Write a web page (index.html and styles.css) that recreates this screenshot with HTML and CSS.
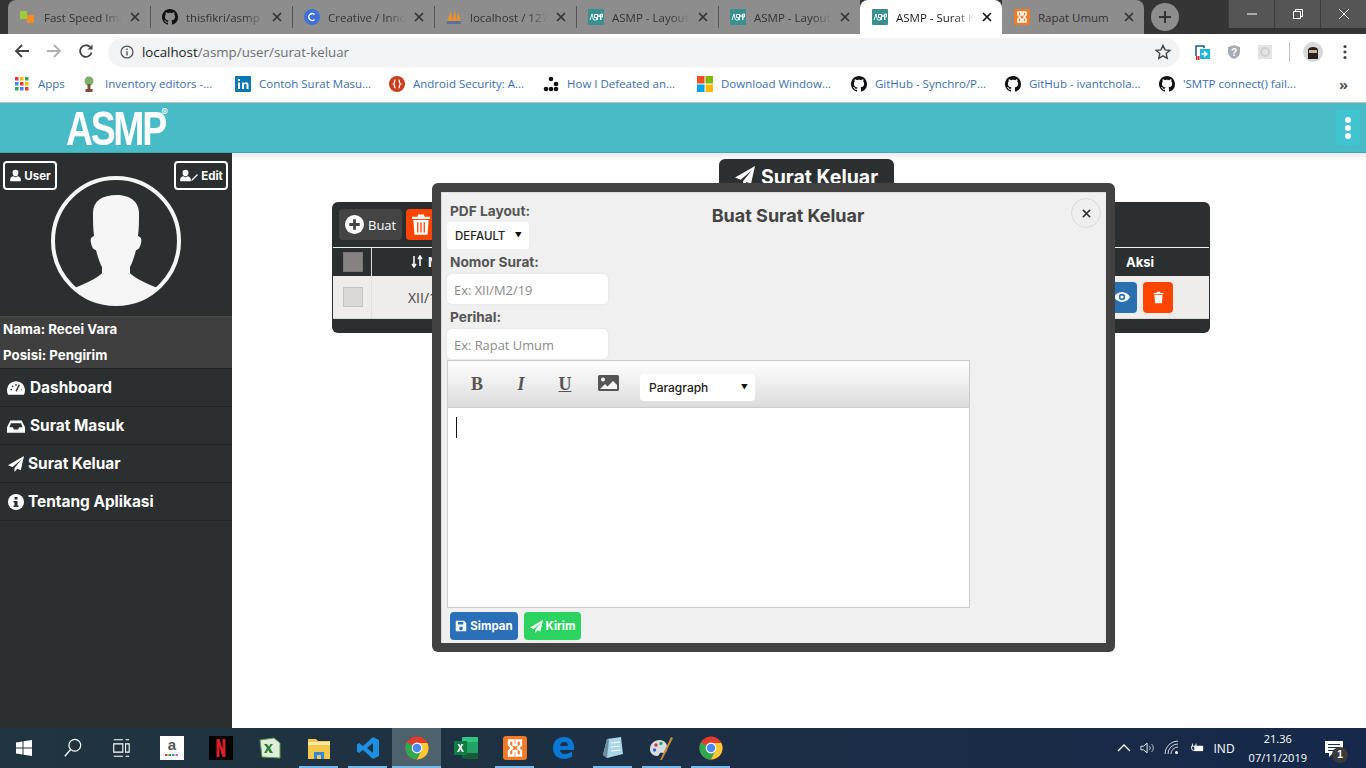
FILE: index.html
```html
<!DOCTYPE html>
<html lang="id">
<head>
<meta charset="utf-8">
<title>ASMP - Surat Keluar</title>
<link rel="stylesheet" href="styles.css">
</head>
<body>
<svg class="defs" aria-hidden="true">
  <defs>
    <symbol id="gh" viewBox="0 0 16 16"><path d="M8 0C3.58 0 0 3.58 0 8c0 3.54 2.29 6.53 5.47 7.59.4.07.55-.17.55-.38 0-.19-.01-.82-.01-1.49-2.01.37-2.53-.49-2.69-.94-.09-.23-.48-.94-.82-1.13-.28-.15-.68-.52-.01-.53.63-.01 1.08.58 1.23.82.72 1.21 1.87.87 2.33.66.07-.52.28-.87.51-1.07-1.78-.2-3.64-.89-3.64-3.95 0-.87.31-1.59.82-2.15-.08-.2-.36-1.02.08-2.12 0 0 .67-.21 2.2.82.64-.18 1.32-.27 2-.27.68 0 1.36.09 2 .27 1.53-1.04 2.2-.82 2.2-.82.44 1.1.16 1.92.08 2.12.51.56.82 1.27.82 2.15 0 3.07-1.87 3.75-3.65 3.95.29.25.54.73.54 1.48 0 1.07-.01 1.93-.01 2.2 0 .21.15.46.55.38A8.013 8.013 0 0016 8c0-4.42-3.58-8-8-8z"/></symbol>
    <symbol id="x" viewBox="0 0 10 10"><path d="M1 1l8 8M9 1l-8 8" fill="none" stroke="currentColor" stroke-width="1.7"/></symbol>
    <symbol id="asmpfav" viewBox="0 0 16 16"><rect width="16" height="16" rx="1" fill="#3a8f8f"/><path d="M2 11l2-6 1.5 6M6 11h2.5V8.5H6.5V5.5H9M9.5 11V5l1.5 3 1.5-3v6M13 11V5h1.5v3H13" fill="none" stroke="#fff" stroke-width=".9"/></symbol>
    <symbol id="xampp" viewBox="0 0 16 16"><rect width="16" height="16" rx="2" fill="#f07a26"/><path d="M4 3h3v3h2V3h3v3l-2 2 2 2v3H9v-3H7v3H4v-3l2-2-2-2z" fill="none" stroke="#fff" stroke-width="1.6"/></symbol>
    <symbol id="plane" viewBox="0 0 16 16"><path d="M16 0L0 9.200l4.500 1.800L13.500 3.400 6.500 12v4l2.700-3.300 3.600 1.500z"/></symbol>
    <symbol id="user" viewBox="0 0 16 16"><path d="M8 1a3.600 3.600 0 0 1 3.600 3.800C11.600 7 10 9 8 9S4.400 7 4.400 4.800A3.600 3.600 0 0 1 8 1zM1.500 15v-2.400C1.500 10.500 3.500 9.300 5.300 8.900 6 9.700 7 10.100 8 10.100s2-.4 2.700-1.200c1.800.4 3.800 1.600 3.800 3.700V15z"/></symbol>
    <symbol id="trash" viewBox="0 0 16 16"><path d="M6 1h4l.6 1.400H14v1.600H2V2.400h3.400zM3 5h10l-.8 10H3.800z"/></symbol>
    <symbol id="chrome" viewBox="0 0 24 24"><circle cx="12" cy="12" r="11.500" fill="#e33b2e"/><path d="M12 12L2 6.200A11.500 11.500 0 0 0 12 23.500L17.800 13z" fill="#2fa84f"/><path d="M12 7h10.400A11.500 11.500 0 0 1 12 23.500L17 13z" fill="#fcc934"/><circle cx="12" cy="12" r="5.400" fill="#fff"/><circle cx="12" cy="12" r="4.200" fill="#4a89f3"/></symbol>
  </defs>
</svg>

<div class="tabstrip">
  <div class="tab">
    <svg class="fav" viewBox="0 0 16 16"><rect x="1" y="2" width="7" height="8" fill="#9ccc3c"/><rect x="8" y="6" width="7" height="8" fill="#f58a1f"/></svg>
    <span class="tab-title">Fast Speed Ima</span><svg class="tab-x"><use href="#x"/></svg>
  </div>
  <div class="tab">
    <svg class="fav"><use href="#gh"/></svg>
    <span class="tab-title">thisfikri/asmp</span><svg class="tab-x"><use href="#x"/></svg>
  </div>
  <div class="tab">
    <svg class="fav" viewBox="0 0 16 16"><circle cx="8" cy="8" r="8" fill="#3f6fd8"/><path d="M10.500 5.500a3.400 3.400 0 1 0 0 5" fill="none" stroke="#fff" stroke-width="1.400"/></svg>
    <span class="tab-title">Creative / Inno</span><svg class="tab-x"><use href="#x"/></svg>
  </div>
  <div class="tab">
    <svg class="fav" viewBox="0 0 16 16"><path d="M1 12L5 2l1.500 10zM6 12L9 1l1.500 11zM10.500 12L12 3l3 9z" fill="#e8902a"/><rect x="1" y="12" width="14" height="3" fill="#5a6fa8"/></svg>
    <span class="tab-title">localhost / 127</span><svg class="tab-x"><use href="#x"/></svg>
  </div>
  <div class="tab">
    <svg class="fav"><use href="#asmpfav"/></svg>
    <span class="tab-title">ASMP - Layout</span><svg class="tab-x"><use href="#x"/></svg>
  </div>
  <div class="tab">
    <svg class="fav"><use href="#asmpfav"/></svg>
    <span class="tab-title">ASMP - Layout</span><svg class="tab-x"><use href="#x"/></svg>
  </div>
  <div class="tab tab-active">
    <svg class="fav"><use href="#asmpfav"/></svg>
    <span class="tab-title">ASMP - Surat K</span><svg class="tab-x"><use href="#x"/></svg>
  </div>
  <div class="tab tab-last">
    <svg class="fav"><use href="#xampp"/></svg>
    <span class="tab-title">Rapat Umum</span><svg class="tab-x"><use href="#x"/></svg>
  </div>
  <div class="newtab"><svg viewBox="0 0 14 14"><path d="M7 1v12M1 7h12" fill="none" stroke="#333" stroke-width="2"/></svg></div>
  <div class="winctrls">
    <div class="winbtn"><svg viewBox="0 0 12 12"><path d="M1 6h10" stroke="#fff" stroke-width="1" fill="none"/></svg></div>
    <div class="winbtn"><svg viewBox="0 0 12 12"><path d="M1.500 3.500h7v7h-7zM3.500 3.500v-2h7v7h-2" stroke="#fff" stroke-width="1" fill="none"/></svg></div>
    <div class="winbtn"><svg viewBox="0 0 12 12"><path d="M1 1l10 10M11 1L1 11" stroke="#fff" stroke-width="1" fill="none"/></svg></div>
  </div>
</div>

<div class="toolbar">
  <svg class="nav-ic" viewBox="0 0 16 16"><path d="M15 8H2M8 2L2 8l6 6" fill="none" stroke="#444" stroke-width="1.800"/></svg>
  <svg class="nav-ic" viewBox="0 0 16 16"><path d="M1 8h13M8 2l6 6-6 6" fill="none" stroke="#b0b0b0" stroke-width="1.800"/></svg>
  <svg class="nav-ic" viewBox="0 0 16 16"><path d="M13.500 9.500A5.800 5.800 0 1 1 12 4" fill="none" stroke="#444" stroke-width="1.800"/><path d="M14.500 1.500v5h-5z" fill="#444"/></svg>
  <div class="omnibox">
    <svg class="omni-info" viewBox="0 0 16 16"><circle cx="8" cy="8" r="6.800" fill="none" stroke="#555" stroke-width="1.500"/><path d="M8 7v5M8 4v1.600" stroke="#555" stroke-width="1.600"/></svg>
    <span class="url"><span class="url-host">localhost</span>/asmp/user/surat-keluar</span>
    <svg class="omni-star" viewBox="0 0 16 16"><path d="M8 1.500l2 4.400 4.700.5-3.500 3.200 1 4.700L8 11.900l-4.200 2.400 1-4.700L1.300 6.400 6 5.900z" fill="none" stroke="#444" stroke-width="1.400"/></svg>
  </div>
  <div class="ext-row">
    <svg class="ext" viewBox="0 0 16 16"><path d="M1 12V2h8v2" fill="none" stroke="#1d5a8a" stroke-width="1.500"/><rect x="5" y="5" width="10" height="10" fill="#1fb7dc"/><path d="M6.500 10h5M9 7.500l3 2.500-3 2.500" fill="none" stroke="#fff" stroke-width="1.500"/><rect x="1" y="12" width="1.500" height="4" fill="#e02020"/><rect x="3" y="12" width="1.500" height="4" fill="#e02020"/></svg>
    <svg class="ext" viewBox="0 0 16 16"><path d="M8 1l6 2v5c0 3.500-3 6-6 7-3-1-6-3.500-6-7V3z" fill="#a8adb5"/><text x="8" y="11.500" class="ext-q">?</text></svg>
    <svg class="ext" viewBox="0 0 16 16"><rect x="1" y="1" width="14" height="14" fill="#e4e4e4"/><circle cx="8" cy="8" r="4" fill="none" stroke="#cfcfcf" stroke-width="2"/></svg>
    <span class="ext-sep"></span>
    <svg class="ext-avatar" viewBox="0 0 20 20"><circle cx="10" cy="10" r="10" fill="#d8d8d8"/><path d="M5 8c0-4 10-4 10 0v9H5z" fill="#222"/><rect x="6" y="8" width="8" height="3" fill="#d9b08c"/></svg>
    <svg class="ext-dots" viewBox="0 0 4 16"><circle cx="2" cy="2.500" r="1.600" fill="#444"/><circle cx="2" cy="8" r="1.600" fill="#444"/><circle cx="2" cy="13.500" r="1.600" fill="#444"/></svg>
  </div>
</div>

<div class="bookmarks">
  <div class="bm bm-apps">
    <svg class="bm-ic" viewBox="0 0 14 14"><g><rect width="3.500" height="3.500" fill="#e53935"/><rect x="5" width="3.500" height="3.500" fill="#fbbc05"/><rect x="10" width="3.500" height="3.500" fill="#34a853"/><rect y="5" width="3.500" height="3.500" fill="#4285f4"/><rect x="5" y="5" width="3.500" height="3.500" fill="#e53935"/><rect x="10" y="5" width="3.500" height="3.500" fill="#fbbc05"/><rect y="10" width="3.500" height="3.500" fill="#34a853"/><rect x="5" y="10" width="3.500" height="3.500" fill="#4285f4"/><rect x="10" y="10" width="3.500" height="3.500" fill="#e53935"/></g></svg>
    <span>Apps</span>
  </div>
  <div class="bm"><svg class="bm-ic" viewBox="0 0 16 16"><circle cx="8" cy="5" r="4.500" fill="#7fae6a"/><rect x="6.500" y="8" width="3" height="5" fill="#6b5a3a"/><rect x="4.500" y="13" width="7" height="3" fill="#8a4b3a"/></svg><span>Inventory editors -...</span></div>
  <div class="bm"><svg class="bm-ic" viewBox="0 0 16 16"><rect width="16" height="16" rx="1" fill="#0a78b5"/><path d="M3 6.500h2V13H3zM3 3h2v2H3zM7 6.500h2v1c.5-.8 1.300-1.200 2.200-1.200 1.500 0 2.300 1 2.300 2.800V13h-2V9.500c0-.9-.4-1.400-1.100-1.400S9 8.600 9 9.500V13H7z" fill="#fff"/></svg><span>Contoh Surat Masu...</span></div>
  <div class="bm"><svg class="bm-ic" viewBox="0 0 16 16"><circle cx="8" cy="8" r="8" fill="#c8401e"/><path d="M6.500 4C5 4 6 7.500 4.500 8 6 8.500 5 12 6.500 12M9.500 4C11 4 10 7.500 11.500 8 10 8.500 11 12 9.500 12" fill="none" stroke="#fff" stroke-width="1.300"/></svg><span>Android Security: A...</span></div>
  <div class="bm"><svg class="bm-ic" viewBox="0 0 16 16"><rect width="16" height="16" fill="#fff"/><circle cx="8" cy="3" r="2.300"/><circle cx="13" cy="8" r="2.300"/><circle cx="3" cy="13" r="2.300"/><circle cx="8" cy="13" r="2.300"/><circle cx="13" cy="13" r="2.300"/></svg><span>How I Defeated an...</span></div>
  <div class="bm"><svg class="bm-ic" viewBox="0 0 16 16"><rect width="7.500" height="7.500" fill="#f25022"/><rect x="8.500" width="7.500" height="7.500" fill="#7fba00"/><rect y="8.500" width="7.500" height="7.500" fill="#00a4ef"/><rect x="8.500" y="8.500" width="7.500" height="7.500" fill="#ffb900"/></svg><span>Download Window...</span></div>
  <div class="bm"><svg class="bm-ic"><use href="#gh"/></svg><span>GitHub - Synchro/P...</span></div>
  <div class="bm"><svg class="bm-ic"><use href="#gh"/></svg><span>GitHub - ivantchola...</span></div>
  <div class="bm"><svg class="bm-ic"><use href="#gh"/></svg><span>'SMTP connect() fail...</span></div>
  <span class="bm-more">»</span>
</div>

<header class="topbar">
  <div class="logo"><span class="logo-text">ASMP</span><span class="logo-reg">®</span></div>
  <div class="topbar-menu"><span></span><span></span><span></span></div>
</header>

<div class="app">
  <aside class="sidebar">
    <div class="side-btns">
      <div class="side-btn"><svg class="ic-13"><use href="#user"/></svg>User</div>
      <div class="side-btn"><svg class="ic-13"><use href="#user"/></svg><svg class="ic-pen" viewBox="0 0 8 8"><path d="M0 8l2-1 6-6-1-1-6 6z"/></svg>Edit</div>
    </div>
    <div class="avatar-wrap">
      <svg class="avatar" viewBox="0 0 130 130">
        <defs><clipPath id="avclip"><circle cx="65" cy="65" r="63"/></clipPath></defs>
        <circle cx="65" cy="65" r="63" fill="none" stroke="#f5f5f5" stroke-width="4"/>
        <path clip-path="url(#avclip)" d="M66 19c-15 0-24 6-24 18 0 8 0 15 1 23-3 1-4 3-3 7 1 5 3 7 5 7 2 8 4 13 6 17v6c-4 5-14 9-25 14l-6 3v26h90v-26l-6-3c-11-5-21-9-25-14v-6c2-4 4-9 6-17 2 0 4-2 5-7 1-4 0-6-3-7 1-8 1-15 1-23 0-12-10-18-22-18z" fill="#f5f5f5"/>
      </svg>
    </div>
    <div class="side-info">
      <div>Nama: Recei Vara</div>
      <div>Posisi: Pengirim</div>
    </div>
    <nav class="side-menu">
      <div class="side-item"><svg class="ic-18" viewBox="0 0 16 16"><path d="M8 2a7.800 7.800 0 0 0-8 8c0 1.500.4 2.800 1 4h14c.6-1.200 1-2.500 1-4a7.800 7.800 0 0 0-8-8z"/><path d="M8 11L11 5M3 9.500h1.500M4.500 6l1 1M8 4.500V6M12.500 9.500H13" stroke="#2c2f30" stroke-width="1.200" fill="none"/></svg>Dashboard</div>
      <div class="side-item"><svg class="ic-18" viewBox="0 0 16 16"><path d="M3 3h10l3 6v5H0V9z"/><path d="M3.500 5.500h9l1.300 3.500h-3l-1 2H6.200l-1-2h-3z" fill="#2c2f30"/></svg>Surat Masuk</div>
      <div class="side-item side-item-tight"><svg class="ic-16"><use href="#plane"/></svg>Surat Keluar</div>
      <div class="side-item side-item-tight"><svg class="ic-16" viewBox="0 0 16 16"><circle cx="8" cy="8" r="8"/><path d="M6.500 3h3v2.500h-3zM5.500 7h4v4.500h1V13h-5v-1.500h1V8.500h-1z" fill="#2c2f30"/></svg>Tentang Aplikasi</div>
    </nav>
  </aside>

  <main class="content">
    <div class="page-title"><svg class="ic-title"><use href="#plane"/></svg>Surat Keluar</div>
    <section class="panel">
      <div class="panel-head">
        <div class="btn-buat"><svg class="ic-plus" viewBox="0 0 20 20"><circle cx="10" cy="10" r="10" fill="#fff"/><path d="M10 4.500v11M4.500 10h11" stroke="#444" stroke-width="3"/></svg>Buat</div>
        <div class="btn-del"><svg class="ic-del" viewBox="0 0 16 18"><path d="M5.500 0h5l.7 2H16v2H0V2h4.800zM1.200 5h13.600l-1 13H2.200zM4.500 7v9h1.200V7zM7.400 7v9h1.200V7zM10.300 7v9h1.200V7z" fill-rule="evenodd"/></svg></div>
      </div>
      <div class="row row-head">
        <div class="cell-check"><span class="check check-dark"></span></div>
        <div class="cell-main cell-sort"><svg class="ic-sort" viewBox="0 0 14 14"><path d="M3 1v10M1 9l2 3 2-3M9 1v10M7 4l2-3 2 3" fill="none" stroke="#fff" stroke-width="1.500"/></svg>N</div>
        <div class="cell-act cell-act-head">Aksi</div>
      </div>
      <div class="row row-body">
        <div class="cell-check"><span class="check"></span></div>
        <div class="cell-main">XII/1</div>
        <div class="cell-act">
          <span class="act act-view"><svg class="ic-eye" viewBox="0 0 16 10"><path d="M8 0c3.500 0 6.500 2.200 8 5-1.500 2.800-4.500 5-8 5S1.500 7.800 0 5c1.500-2.800 4.500-5 8-5z" fill="#fff"/><circle cx="8" cy="5" r="3.200" fill="#2a6fb0"/><circle cx="8" cy="5" r="1.600" fill="#fff"/></svg></span>
          <span class="act act-del"><svg class="ic-13"><use href="#trash"/></svg></span>
        </div>
      </div>
      <div class="panel-foot"></div>
    </section>
  </main>

  <div class="modal">
    <div class="modal-inner">
      <button class="modal-close" type="button"><svg class="ic-10"><use href="#x"/></svg></button>
      <h2 class="modal-title">Buat Surat Keluar</h2>
      <label class="f-label">PDF Layout:</label>
      <div class="select select-pdf"><span>DEFAULT</span><span class="caret">▼</span></div>
      <label class="f-label f-gap">Nomor Surat:</label>
      <div class="input">Ex: XII/M2/19</div>
      <label class="f-label f-gap">Perihal:</label>
      <div class="input">Ex: Rapat Umum</div>
      <div class="editor">
        <div class="editor-bar">
          <span class="ed-btn ed-b">B</span>
          <span class="ed-btn ed-i">I</span>
          <span class="ed-btn ed-u">U</span>
          <svg class="ed-img" viewBox="0 0 21 16"><path d="M1.500 0h18A1.500 1.500 0 0 1 21 1.500v13a1.500 1.500 0 0 1-1.500 1.500h-18A1.500 1.500 0 0 1 0 14.500v-13A1.500 1.500 0 0 1 1.500 0z" fill="#555"/><circle cx="5" cy="4.500" r="2" fill="#f4f4f4"/><path d="M2 14l5-5 2.500 2.500L15 6l4 4v4z" fill="#f4f4f4"/></svg>
          <div class="select select-para"><span>Paragraph</span><span class="caret">▼</span></div>
        </div>
        <div class="editor-body"><span class="text-cursor"></span></div>
      </div>
      <div class="modal-actions">
        <span class="m-btn m-save"><svg class="ic-12" viewBox="0 0 16 16"><path d="M1.500 1H12l3 3v10.500a.5.500 0 0 1-.5.500h-13a.5.500 0 0 1-.5-.5v-13a.5.500 0 0 1 .5-.5zM4 2.500V6h7V2.500zM8 8.500a2.500 2.500 0 1 0 0 5 2.500 2.500 0 0 0 0-5z" fill-rule="evenodd"/></svg>Simpan</span>
        <span class="m-btn m-send"><svg class="ic-13"><use href="#plane"/></svg>Kirim</span>
      </div>
    </div>
  </div>
</div>

<footer class="taskbar">
  <div class="tb-cell tb-start"><svg class="tb-ic-start" viewBox="0 0 16 16"><path d="M0 2.500l6.500-1V7.500H0zM7.500 1.300L16 0v7.500H7.500zM0 8.500h6.500v6L0 13.500zM7.500 8.500H16V16l-8.500-1.300z" fill="#fff"/></svg></div>
  <div class="tb-cell tb-small"><svg class="tb-ic" viewBox="0 0 22 22"><circle cx="13" cy="8" r="6.500" fill="none" stroke="#fff" stroke-width="1.300"/><path d="M8.500 12.500L2 20" stroke="#fff" stroke-width="1.500"/></svg></div>
  <div class="tb-cell tb-small tb-small-last"><svg class="tb-ic" viewBox="0 0 22 22"><path d="M3 2h10M3 20h10M3 6.500h10v9H3zM16 2h4M16 20h4M16 6.500h4v9h-4z" fill="none" stroke="#fff" stroke-width="1.200"/></svg></div>
  <div class="tb-cell"><svg class="tb-ic-lg" viewBox="0 0 24 24"><rect width="24" height="24" fill="#fff"/><text x="12" y="14" class="tb-a">a</text><rect x="5" y="18" width="2.500" height="2" fill="#e33"/><rect x="8.500" y="18" width="2.500" height="2" fill="#3a3"/><rect x="12" y="18" width="2.500" height="2" fill="#39c"/><rect x="15.500" y="18" width="2.500" height="2" fill="#c6c"/></svg></div>
  <div class="tb-cell"><svg class="tb-ic-lg" viewBox="0 0 24 24"><rect width="24" height="24" fill="#000"/><path d="M7.500 3h3l3 10V3h3v18h-3l-3-10v10h-3z" fill="#d81f26"/></svg></div>
  <div class="tb-cell"><svg class="tb-ic-lg" viewBox="0 0 24 24"><path d="M2 4l14-2 6 5v15l-18-1z" fill="#dfeeda" stroke="#5f9a4b"/><path d="M6 8l3 4-3 5h2.500l1.700-3 1.700 3H15l-3-5 3-4h-2.500l-1.500 2.500L9 8z" fill="#2f7d32"/></svg></div>
  <div class="tb-cell tb-open"><svg class="tb-ic-lg" viewBox="0 0 24 24"><path d="M1 3h8l2 2h12v18H1z" fill="#f2c94c"/><rect x="1" y="6" width="22" height="3" fill="#fbe9a6"/><path d="M7 23v-7h10v7h-3v-4h-4v4z" fill="#2f87d8"/></svg></div>
  <div class="tb-cell tb-open"><svg class="tb-ic-lg" viewBox="0 0 24 24"><path d="M17 1l6 3v16l-6 3-10-9-4 3-2-1.500V8.500L3 7l4 3zM17 7l-6 5 6 5z" fill="#1e8fe0" fill-rule="evenodd"/></svg></div>
  <div class="tb-cell tb-active"><svg class="tb-ic-lg"><use href="#chrome"/></svg></div>
  <div class="tb-cell"><svg class="tb-ic-lg" viewBox="0 0 24 24"><rect x="8" y="1" width="16" height="22" fill="#21a366"/><path d="M8 1h16v5H8z" fill="#33c481"/><path d="M8 17h16v6H8z" fill="#185c37"/><rect y="5" width="13" height="14" fill="#107c41"/><path d="M3.500 8l2 3.500L3 16h2l1.500-2.800L8 16h2l-2.500-4.500 2-3.500h-2L6.500 10 5.300 8z" fill="#fff"/></svg></div>
  <div class="tb-cell tb-open"><svg class="tb-ic-lg"><use href="#xampp"/></svg></div>
  <div class="tb-cell"><svg class="tb-ic-lg" viewBox="0 0 24 24"><path d="M12 1C5 1 1 6 1 12c0 7 5 11 11 11 3.500 0 6-1 8-2.500v-5c-2 1.500-4.500 2.500-7 2.500-3 0-5-1.500-5-4h14V11C22 5 18 1 12 1zM8 10c.3-2.500 2-4 4.200-4s3.800 1.500 3.800 4z" fill="#0a78d7" fill-rule="evenodd"/></svg></div>
  <div class="tb-cell tb-open"><svg class="tb-ic-lg" viewBox="0 0 24 24"><path d="M6 3l14-2 2 17-16 4-4-3z" fill="#a9d6e8"/><path d="M6 3l-4 16 4 3 2-18z" fill="#6a8ea0"/><path d="M10 7l9-1M10 11l9-1M10 15l9-1" stroke="#fff"/></svg></div>
  <div class="tb-cell tb-open"><svg class="tb-ic-lg" viewBox="0 0 24 24"><path d="M10 4C4 4 0 8 0 13c0 4 3 7 7 7 2 0 2-2 3-3s4 1 6-1c3-3 1-12-6-12z" fill="#d8dde2"/><circle cx="6" cy="9" r="1.700" fill="#d33"/><circle cx="11" cy="7.500" r="1.700" fill="#2a7"/><circle cx="4.500" cy="14" r="1.700" fill="#36c"/><path d="M21 1l2 1-11 22h-2z" fill="#c98a3c"/></svg></div>
  <div class="tb-cell tb-open"><svg class="tb-ic-lg"><use href="#chrome"/></svg></div>
  <div class="tray">
    <svg class="tray-ic" viewBox="0 0 16 16"><path d="M2 11l6-6 6 6" fill="none" stroke="#fff" stroke-width="1.300"/></svg>
    <svg class="tray-ic" viewBox="0 0 18 16"><path d="M1 6h3l4-3.500v11L4 10H1z" fill="none" stroke="#fff"/><path d="M10.500 5.500a3.500 3.500 0 0 1 0 5M13 3.500a6 6 0 0 1 0 9" fill="none" stroke="#c8ced4"/></svg>
    <svg class="tray-ic" viewBox="0 0 16 16"><path d="M1 14A13 13 0 0 1 14 1M4 14A10 10 0 0 1 14 4M7 14a7 7 0 0 1 7-7" fill="none" stroke="#d0d5da"/><circle cx="12.500" cy="12.500" r="1.500" fill="#fff"/></svg>
    <svg class="tray-ic" viewBox="0 0 18 16"><path d="M5 3v3M9 3v3M4 6h6v2a3 3 0 0 1-6 0z" fill="none" stroke="#fff"/><rect x="7" y="5.500" width="10" height="6" fill="#fff"/></svg>
    <span class="tray-lang">IND</span>
    <div class="clock"><span>21.36</span><span>07/11/2019</span></div>
    <div class="notif">
      <svg class="notif-ic" viewBox="0 0 18 18"><path d="M0 1h18v12H8l-4 4v-4H0z" fill="#fff"/><path d="M3 4.500h12M3 7.500h12M3 10.500h8" stroke="#1c2d4a"/></svg>
      <span class="notif-badge">1</span>
    </div>
  </div>
</footer>
</body>
</html>
```

FILE: styles.css
```css
* { box-sizing: border-box; }
html, body { margin: 0; padding: 0; }
body {
  width: 1366px;
  height: 768px;
  overflow: hidden;
  display: flex;
  flex-direction: column;
  font-family: "Inter", "Liberation Sans", sans-serif;
  background: #fff;
  position: relative;
}
svg { display: block; flex: none; fill: currentColor; }
.defs { width: 0; height: 0; position: absolute; }

/* browser tab strip */
.tabstrip {
  height: 34px;
  flex: none;
  display: flex;
  background: #353535;
  padding-left: 8px;
  font-family: "Open Sans", "Liberation Sans", sans-serif;
  font-size: 11.500px;
  color: #333;
}
.tab {
  width: 142px;
  height: 34px;
  flex: none;
  display: flex;
  align-items: center;
  background: #8d8d8d;
  padding: 0 10px 0 11px;
  position: relative;
}
.tab:first-child { border-radius: 8px 0 0 0; }
.tab:first-child .tab-title { margin-left: 9px; }
.tab + .tab { padding-left: 12px; }
.tab + .tab::before {
  content: "";
  position: absolute;
  left: 0;
  top: 6px;
  height: 22px;
  border-left: 1px solid #555;
}
.tab-active { background: #fff; color: #222; border-radius: 8px 8px 0 0; }
.tab-active::before, .tab-last::before { display: none; }
.tab-last { border-radius: 0 8px 0 0; }
.fav { width: 16px; height: 16px; color: #111; }
.tab-title {
  margin-left: 8px;
  flex: 1;
  min-width: 0;
  white-space: nowrap;
  -webkit-mask-image: linear-gradient(to right, #000 75%, transparent 100%);
  mask-image: linear-gradient(to right, #000 75%, transparent 100%);
}
.tab-last .tab-title, .tab-last .tab-title { -webkit-mask-image: none; mask-image: none; }
.tab-x { width: 10px; height: 10px; margin-left: 8px; color: #333; }
.tab-active .tab-x { color: #111; }
.newtab {
  width: 28px;
  height: 28px;
  margin: 3px 0 0 7px;
  flex: none;
  border-radius: 50%;
  background: #8d8d8d;
  display: flex;
  align-items: center;
  justify-content: center;
}
.newtab svg { width: 14px; height: 14px; }
.winctrls { margin-left: auto; display: flex; height: 28px; }
.winbtn {
  width: 46px;
  background: #555;
  border-left: 1px solid #3d3d3d;
  display: flex;
  align-items: center;
  justify-content: center;
}
.winbtn svg { width: 12px; height: 12px; }

/* browser toolbar */
.toolbar {
  height: 33px;
  flex: none;
  display: flex;
  align-items: center;
  padding-left: 14px;
  background: #fff;
}
.nav-ic { width: 16px; height: 16px; margin-right: 16px; }
.omnibox {
  width: 1072px;
  height: 29px;
  margin-left: -2px;
  border-radius: 15px;
  background: #f1f3f4;
  display: flex;
  align-items: center;
  padding: 0 9px 0 12px;
  margin-top: 3px;
}
.omni-info { width: 14px; height: 14px; }
.url {
  margin-left: 8px;
  font-family: "Open Sans", "Liberation Sans", sans-serif;
  font-size: 13.300px;
  color: #6b6f73;
}
.url-host { color: #222; }
.omni-star { width: 16px; height: 16px; margin-left: auto; }
.ext-row { display: flex; align-items: center; padding-left: 15px; margin-top: 3px; }
.ext { width: 16px; height: 16px; margin-right: 15px; }
.ext-q { font: 700 10px "Liberation Sans", sans-serif; fill: #fff; text-anchor: middle; }
.ext-sep { width: 1px; height: 20px; background: #c4c4c4; margin: 0 13px 0 1px; }
.ext-avatar { width: 20px; height: 20px; margin-right: 20px; }
.ext-dots { width: 4px; height: 16px; }

/* bookmarks */
.bookmarks {
  height: 36px;
  flex: none;
  display: flex;
  align-items: center;
  padding: 0 0 2px 15px;
  background: #fff;
  border-bottom: 1px solid #c4c4c4;
  font-family: "Open Sans", "Liberation Sans", sans-serif;
  font-size: 11.500px;
  color: #3b6fb0;
}
.bm { width: 154px; flex: none; display: flex; align-items: center; gap: 8px; white-space: nowrap; }
.bm-apps { width: 66px; gap: 9px; }
.bm-apps .bm-ic { width: 14px; height: 14px; }
.bm-ic { width: 16px; height: 16px; color: #111; }
.bm-more { margin-left: 26px; font-size: 15px; font-weight: 700; color: #555; }

/* app top bar */
.topbar {
  height: 50px;
  flex: none;
  display: flex;
  align-items: center;
  justify-content: space-between;
  background: #47bcc7;
  border-bottom: 1px solid #3fa8b2;
  padding-right: 6px;
}
.logo { margin-left: 66px; width: 100px; height: 44px; position: relative; color: #fff; }
.logo-text {
  display: block;
  font: 700 48px/44px "Liberation Sans", sans-serif;
  letter-spacing: -3px;
  transform: scaleX(.78);
  transform-origin: left center;
  margin-top: 1px;
}
.logo-reg { position: absolute; top: 0; right: -2px; font-size: 10px; line-height: 12px; }
.topbar-menu {
  width: 24px;
  height: 35px;
  border-radius: 3px;
  background: #3fc4d0;
  display: flex;
  flex-direction: column;
  align-items: center;
  justify-content: center;
  gap: 2px;
}
.topbar-menu span { width: 6px; height: 6px; border-radius: 50%; background: #fff; }

/* layout */
.app { flex: 1; min-height: 0; display: flex; position: relative; }

.sidebar {
  width: 232px;
  flex: none;
  background: #2c2f30;
  color: #fff;
  font-weight: 700;
}
.side-btns { display: flex; justify-content: space-between; padding: 8px 4px 0 3px; }
.side-btn {
  height: 29px;
  min-width: 54px;
  border: 2px solid #fff;
  border-radius: 4px;
  display: flex;
  align-items: center;
  justify-content: center;
  gap: 2px;
  font-size: 11.500px;
}
.ic-13 { width: 13px; height: 13px; }
.ic-pen { width: 7px; height: 7px; margin: 4px 1px 0 -3px; }
.avatar-wrap { display: flex; justify-content: center; margin-top: -14px; }
.avatar { width: 130px; height: 130px; }
.side-info {
  margin-top: 10px;
  height: 53px;
  background: #3f3f3f;
  box-shadow: inset 0 1px 0 #4c4c4c;
  border-bottom: 1px solid #222;
  padding-left: 3px;
  font-size: 13.300px;
  line-height: 26px;
}
.side-item {
  height: 38px;
  display: flex;
  align-items: center;
  gap: 5px;
  padding-left: 7px;
  font-size: 15.400px;
  border-bottom: 1px solid #222527;
}
.side-item-tight { gap: 4px; padding-left: 8px; }
.ic-18 { width: 18px; height: 18px; }
.ic-16 { width: 16px; height: 16px; }

.content {
  flex: 1;
  min-width: 0;
  display: flex;
  flex-direction: column;
  background: linear-gradient(#eaeaea, #fff 8px);
  padding: 6px 0 0 100px;
}
.page-title {
  width: 175px;
  height: 60px;
  margin-left: 387px;
  background: #2c2f30;
  color: #fff;
  border-radius: 6px 6px 0 0;
  font-size: 19.500px;
  font-weight: 700;
  display: flex;
  align-items: flex-start;
  justify-content: center;
  gap: 6px;
  padding-top: 7px;
  line-height: 23px;
}
.ic-title { width: 20px; height: 20px; }
.panel {
  width: 878px;
  margin-top: -17px;
  background: #2c2f30;
  border-radius: 6px;
  position: relative;
}
.panel-head { height: 45px; display: flex; align-items: flex-start; gap: 4px; padding: 7px 0 0 7px; }
.btn-buat {
  width: 63px;
  height: 31px;
  border-radius: 4px;
  background: #444;
  color: #fff;
  display: flex;
  align-items: center;
  gap: 4px;
  padding-left: 6px;
  font: 400 13px "Open Sans", "Liberation Sans", sans-serif;
}
.ic-plus { width: 19px; height: 19px; }
.btn-del {
  width: 30px;
  height: 31px;
  border-radius: 4px;
  background: #ff4500;
  color: #fff;
  display: flex;
  align-items: center;
  justify-content: center;
}
.ic-del { width: 18px; height: 21px; }
.row { display: flex; margin: 0 1px; }
.row-head { height: 29px; border-top: 1px solid #f0f0f0; color: #fff; font-size: 13px; font-weight: 700; }
.row-body { height: 43px; background: #eeedeb; border-bottom: 1px solid #dcdcdc; color: #444; font: 400 14px "Open Sans", "Liberation Sans", sans-serif; }
.cell-check { width: 39px; flex: none; display: flex; align-items: center; justify-content: center; padding-left: 1px; border-right: 1px solid #dcdcdc; }
.row-body .cell-check { border-right-color: #e0e0e0; }
.check { width: 20px; height: 20px; background: #dcd9d9; border: 1px solid #c4c4c4; display: block; }
.check-dark { background: #878282; border-color: #777; }
.cell-main { flex: 1; display: flex; align-items: center; padding-left: 36px; }
.cell-sort { padding-left: 39px; gap: 3px; }
.ic-sort { width: 14px; height: 14px; }
.cell-act { width: 102px; flex: none; display: flex; align-items: center; gap: 6px; }
.cell-act-head { justify-content: flex-start; padding-left: 19px; }
.act { width: 30px; height: 31px; border-radius: 4px; display: flex; align-items: center; justify-content: center; color: #fff; }
.act-view { background: #2a6fb0; }
.act-del { background: #ff4500; }
.ic-eye { width: 16px; height: 10px; }
.panel-foot { height: 14px; }

/* modal */
.modal {
  position: absolute;
  left: 432px;
  top: 30px;
  width: 683px;
  height: 469px;
  border-radius: 6px;
  background: #424242;
  padding: 9px;
}
.modal-inner {
  height: 451px;
  background: #f0f0f0;
  border: 1px solid #dcdcdc;
  border-width: 1px 0 0 1px;
  position: relative;
  padding: 9px 0 0 5px;
  display: flex;
  flex-direction: column;
  align-items: flex-start;
}
.modal-title {
  position: absolute;
  left: 0;
  right: 0;
  top: 12px;
  margin: 0;
  text-align: center;
  padding-left: 28px;
  font: 700 18px/22px "Inter", "Liberation Sans", sans-serif;
  color: #444;
}
.modal-close {
  position: absolute;
  right: 5px;
  top: 5px;
  width: 30px;
  height: 30px;
  border-radius: 50%;
  border: 1px solid #e0d6d6;
  background: #f0efef;
  color: #333;
  padding: 0;
  display: flex;
  align-items: center;
  justify-content: center;
}
.ic-10 { width: 9px; height: 9px; }
.f-label { font-size: 13.700px; font-weight: 700; color: #555; line-height: 18px; margin-left: 3px; }
.f-gap { margin-top: 4px; }
.select {
  background: #fff;
  border-radius: 4px;
  display: flex;
  align-items: center;
  justify-content: space-between;
  color: #222;
  font-size: 11.500px;
  font-weight: 500;
}
.caret { font-size: 7px; color: #111; }
.select-pdf { width: 82px; height: 27px; padding: 0 7px 0 8px; margin-top: 2px; }
.select-para { width: 115px; height: 27px; padding: 0 7px 0 9px; margin: 6px 0 0 21px; font-size: 12px; }
.input {
  width: 161px;
  height: 30px;
  background: #fff;
  border-radius: 5px;
  box-shadow: 0 0 2px #d8d8d8;
  color: #8a8a8a;
  font: 400 12.900px/33px "Open Sans", "Liberation Sans", sans-serif;
  padding-left: 7px;
  margin-top: 3px;
}
.editor { width: 523px; height: 248px; margin: 1px 0 0 0; border: 1px solid #ccc; background: #fff; display: flex; flex-direction: column; }
.editor-bar {
  height: 47px;
  flex: none;
  background: linear-gradient(#fff, #dcdcdc);
  border-bottom: 1px solid #ccc;
  display: flex;
  align-items: center;
  padding-left: 21px;
  color: #555;
}
.ed-btn { width: 16px; margin-right: 28px; text-align: center; font: 700 18px "Liberation Serif", serif; }
.ed-i { font-style: italic; }
.ed-u { text-decoration: underline; margin-right: 25px; }
.ed-img { width: 21px; height: 16px; margin-top: -2px; }
.editor-body { flex: 1; padding: 9px 0 0 8px; }
.text-cursor { display: block; width: 1px; height: 21px; background: #111; }
.modal-actions { display: flex; gap: 6px; margin: 4px 0 0 3px; }
.m-btn {
  height: 28px;
  border-radius: 4px;
  display: flex;
  align-items: center;
  justify-content: center;
  gap: 3px;
  color: #fff;
  font-size: 11.500px;
  font-weight: 700;
}
.ic-12 { width: 12px; height: 12px; }
.m-save { width: 68px; background: #2a70b8; }
.m-send { width: 57px; background: #2bd460; }

/* taskbar */
.taskbar {
  height: 40px;
  flex: none;
  display: flex;
  background: linear-gradient(to right, #20353f, #1c2f44 50%, #16284a);
  color: #fff;
}
.tb-cell {
  width: 49px;
  height: 40px;
  flex: none;
  display: flex;
  align-items: center;
  justify-content: center;
  position: relative;
}
.tb-start { width: 48px; margin-right: 1px; }
.tb-ic-start { width: 16px; height: 16px; }
.tb-ic { width: 20px; height: 20px; }
.tb-ic-lg { width: 24px; height: 24px; }
.tb-open::after, .tb-active::after {
  content: "";
  position: absolute;
  left: 5px;
  right: 5px;
  bottom: 0;
  height: 2px;
  background: #76b9ed;
}
.tb-active { background: #4d626c; }
.tb-active::after { left: 0; right: 0; }
.tb-small { width: 48px; }
.tb-small-last { margin-right: 2px; }
.tb-a { font: 700 15px "Liberation Sans", sans-serif; fill: #555; text-anchor: middle; }
.tray { margin-left: auto; display: flex; align-items: center; padding-right: 17px; }
.tray-ic { width: 16px; height: 16px; margin-right: 8px; }
.tray-ic:nth-child(4) { margin-right: 0; }
.tray-lang { font: 400 12px "Open Sans", "Liberation Sans", sans-serif; margin: 0 14px 0 10px; }
.clock {
  display: flex;
  flex-direction: column;
  align-items: center;
  gap: 2px;
  font: 400 11px/17px "Open Sans", "Liberation Sans", sans-serif;
  margin-right: 18px;
}
.notif { position: relative; width: 24px; height: 24px; }
.notif-ic { width: 18px; height: 18px; margin-top: 4px; }
.notif-badge {
  position: absolute;
  left: 7px;
  top: 11px;
  width: 16px;
  height: 16px;
  border-radius: 50%;
  background: #3a3a3a;
  font: 700 10px/16px "Liberation Sans", sans-serif;
  text-align: center;
}
```
